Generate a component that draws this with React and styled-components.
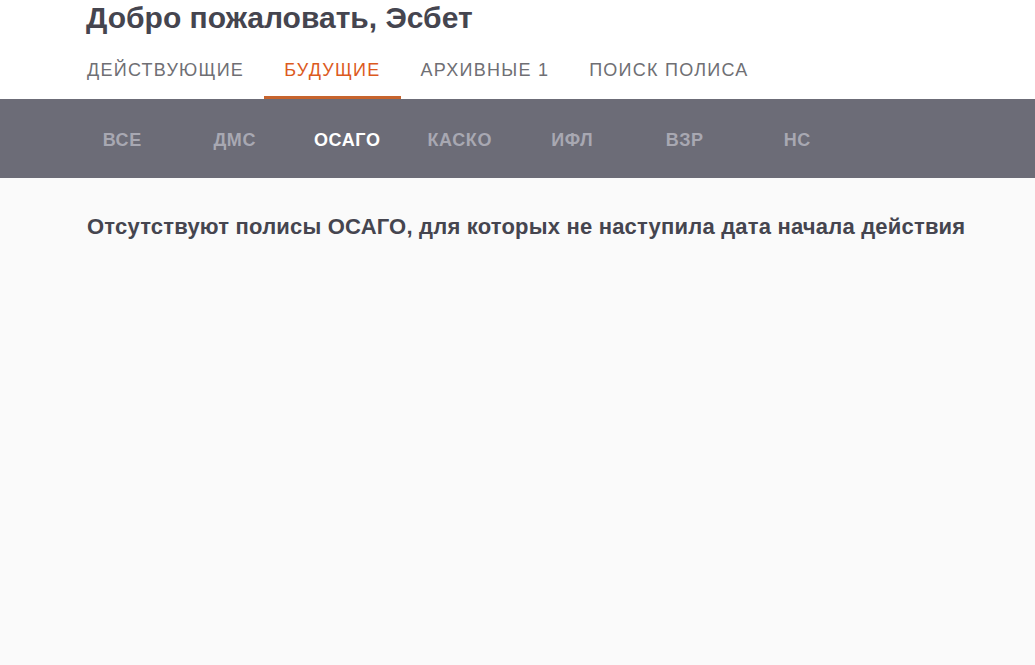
import styled, { createGlobalStyle } from "styled-components";

const Global = createGlobalStyle`
  html, body {
    margin: 0;
    padding: 0;
    background: #fafafa;
    font-family: "Liberation Sans", Arial, sans-serif;
  }
`;

const Page = styled.div`
  min-height: 665px;
  background: #fafafa;
`;

const Header = styled.header`
  background: #ffffff;
  padding: 0 0 0 86px;
`;

const Title = styled.h1`
  margin: 0;
  font-size: 30px;
  line-height: 36px;
  font-weight: 700;
  color: #45454f;
`;

const Tabs = styled.nav`
  display: flex;
  margin-top: 11px;
  margin-left: -19px;
`;

const Tab = styled.div`
  padding: 11px 20px 13px;
  font-size: 18px;
  line-height: 25px;
  letter-spacing: 1.25px;
  text-transform: uppercase;
  color: ${(p) => (p.$active ? "#dc5a1e" : "#6f6f74")};
  border-bottom: 3px solid ${(p) => (p.$active ? "#c7642e" : "transparent")};
`;

const Band = styled.div`
  background: #6c6c77;
  height: 79px;
  box-sizing: border-box;
  padding: 4px 0 0 66px;
  display: flex;
  align-items: center;
`;

const Kind = styled.div`
  width: 112.5px;
  text-align: center;
  font-size: 18px;
  font-weight: 700;
  letter-spacing: 0.6px;
  color: ${(p) => (p.$active ? "#ffffff" : "#a8a8b2")};
`;

const Content = styled.main`
  padding: 35px 0 0 87px;
`;

const Empty = styled.p`
  margin: 0;
  font-size: 22px;
  line-height: 28px;
  font-weight: 700;
  letter-spacing: 0.2px;
  color: #45454f;
`;

const tabs = ["Действующие", "Будущие", "Архивные 1", "Поиск полиса"];
const kinds = ["ВСЕ", "ДМС", "ОСАГО", "КАСКО", "ИФЛ", "ВЗР", "НС"];

export default function App() {
  return (
    <Page>
      <Global />
      <Header>
        <Title>Добро пожаловать, Эсбет</Title>
        <Tabs>
          {tabs.map((t, i) => (
            <Tab key={t} $active={i === 1}>
              {t}
            </Tab>
          ))}
        </Tabs>
      </Header>
      <Band>
        {kinds.map((k) => (
          <Kind key={k} $active={k === "ОСАГО"}>
            {k}
          </Kind>
        ))}
      </Band>
      <Content>
        <Empty>
          Отсутствуют полисы ОСАГО, для которых не наступила дата начала действия
        </Empty>
      </Content>
    </Page>
  );
}
